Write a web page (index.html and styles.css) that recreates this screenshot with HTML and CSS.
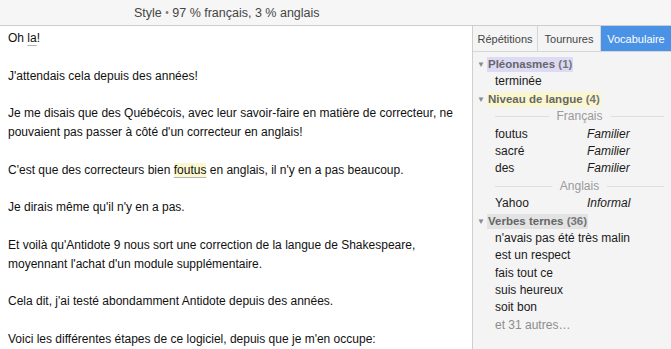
FILE: index.html
```html
<!DOCTYPE html>
<html lang="fr">
<head>
<meta charset="utf-8">
<link rel="stylesheet" href="styles.css">
</head>
<body>
<div class="app">
  <header class="titlebar"><span class="title">Style <span class="dot">•</span> 97 % français, 3 % anglais</span></header>
  <div class="main">
    <div class="editor">
      <p>Oh <span class="mark">la</span>!</p>
      <p>J'attendais cela depuis des années!</p>
      <p>Je me disais que des Québécois, avec leur savoir-faire en matière de correcteur, ne pouvaient pas passer à côté d'un correcteur en anglais!</p>
      <p>C'est que des correcteurs bien <span class="mark hl">foutus</span> en anglais, il n'y en a pas beaucoup.</p>
      <p>Je dirais même qu'il n'y en a pas.</p>
      <p>Et voilà qu'Antidote 9 nous sort une correction de la langue de Shakespeare, moyennant l'achat d'un module supplémentaire.</p>
      <p>Cela dit, j'ai testé abondamment Antidote depuis des années.</p>
      <p>Voici les différentes étapes de ce logiciel, depuis que je m'en occupe:</p>
    </div>
    <aside class="side">
      <div class="tabs">
        <div class="tab">Répétitions</div>
        <div class="tab">Tournures</div>
        <div class="tab active">Vocabulaire</div>
      </div>
      <div class="list">
        <div class="row head"><span class="tri">▼</span><span class="lab lav">Pléonasmes <span class="n">(1)</span></span></div>
        <div class="row item">terminée</div>
        <div class="row head"><span class="tri">▼</span><span class="lab yel">Niveau de langue <span class="n">(4)</span></span></div>
        <div class="row sep"><span>Français</span></div>
        <div class="row item pair"><span class="w">foutus</span><em>Familier</em></div>
        <div class="row item pair"><span class="w">sacré</span><em>Familier</em></div>
        <div class="row item pair"><span class="w">des</span><em>Familier</em></div>
        <div class="row sep"><span>Anglais</span></div>
        <div class="row item pair"><span class="w">Yahoo</span><em>Informal</em></div>
        <div class="row head"><span class="tri">▼</span><span class="lab gry">Verbes ternes <span class="n">(36)</span></span></div>
        <div class="row item">n'avais pas été très malin</div>
        <div class="row item">est un respect</div>
        <div class="row item">fais tout ce</div>
        <div class="row item">suis heureux</div>
        <div class="row item">soit bon</div>
        <div class="row item more">et 31 autres…</div>
      </div>
    </aside>
  </div>
</div>
</body>
</html>
```

FILE: styles.css
```css
* { box-sizing: border-box; }
html, body { margin: 0; padding: 0; }
body {
  width: 671px;
  height: 349px;
  overflow: hidden;
  font-family: "Liberation Sans", Arial, sans-serif;
  background: #fff;
  color: #111;
}
.app { display: flex; flex-direction: column; height: 349px; }
.titlebar {
  height: 26px;
  flex: none;
  background: #f6f6f6;
  border-bottom: 1px solid #cdcdcd;
  display: flex;
  align-items: center;
  padding-left: 134px;
  font-size: 12.5px;
  color: #454545;
}
.title .dot { color: #777; font-size: 10px; vertical-align: 1px; }
.main { display: flex; flex: 1; min-height: 0; }
.editor {
  flex: 1;
  padding: 3px 0 0 8px;
  font-size: 12px;
  line-height: 18.8px;
  overflow: hidden;
}
.editor p { margin: 0 0 18.8px 0; }
.mark {
  text-decoration: underline;
  text-decoration-color: #b5b5b5;
  text-underline-offset: 3px;
}
.hl { background: #fbf8d0; }
.side {
  width: 199px;
  flex: none;
  background: #f4f4f4;
  border-left: 1px solid #cfcfcf;
  display: flex;
  flex-direction: column;
  font-size: 12px;
}
.tabs {
  display: flex;
  height: 26px;
  border-bottom: 1px solid #d6d6d6;
}
.tab {
  display: flex;
  align-items: center;
  justify-content: center;
  color: #444;
  border-right: 1px solid #d6d6d6;
  font-size: 11px;
}
.tab:nth-child(1) { width: 65px; }
.tab:nth-child(2) { width: 63px; }
.tab.active {
  flex: 1;
  border-right: none;
  background: #4a92e6;
  color: #fff;
}
.list { padding: 4px 0 0 0; }
.row {
  height: 17.4px;
  line-height: 17.4px;
  white-space: nowrap;
}
.head { padding-left: 4px; display: flex; align-items: center; }
.tri { color: #8a8a8a; font-size: 8px; width: 10px; display: inline-block; }
.lab {
  font-weight: bold;
  font-size: 11.5px;
  color: #666;
  padding: 0 1px;
  line-height: 15px;
}
.lab .n { color: #777; }
.lav { background: #dcdaf5; }
.yel { background: #faf7cf; }
.gry { background: #e3e3e3; }
.item { padding-left: 22px; color: #1a1a1a; }
.pair { display: flex; }
.pair .w { width: 92px; }
.pair em { font-style: italic; }
.more { color: #8c8c8c; }
.sep {
  display: flex;
  align-items: center;
  margin-left: 22px;
  margin-right: 7px;
  color: #9a9a9a;
  gap: 8px;
}
.sep::before, .sep::after {
  content: "";
  flex: 1;
  height: 1px;
  background: #dedede;
}
```
